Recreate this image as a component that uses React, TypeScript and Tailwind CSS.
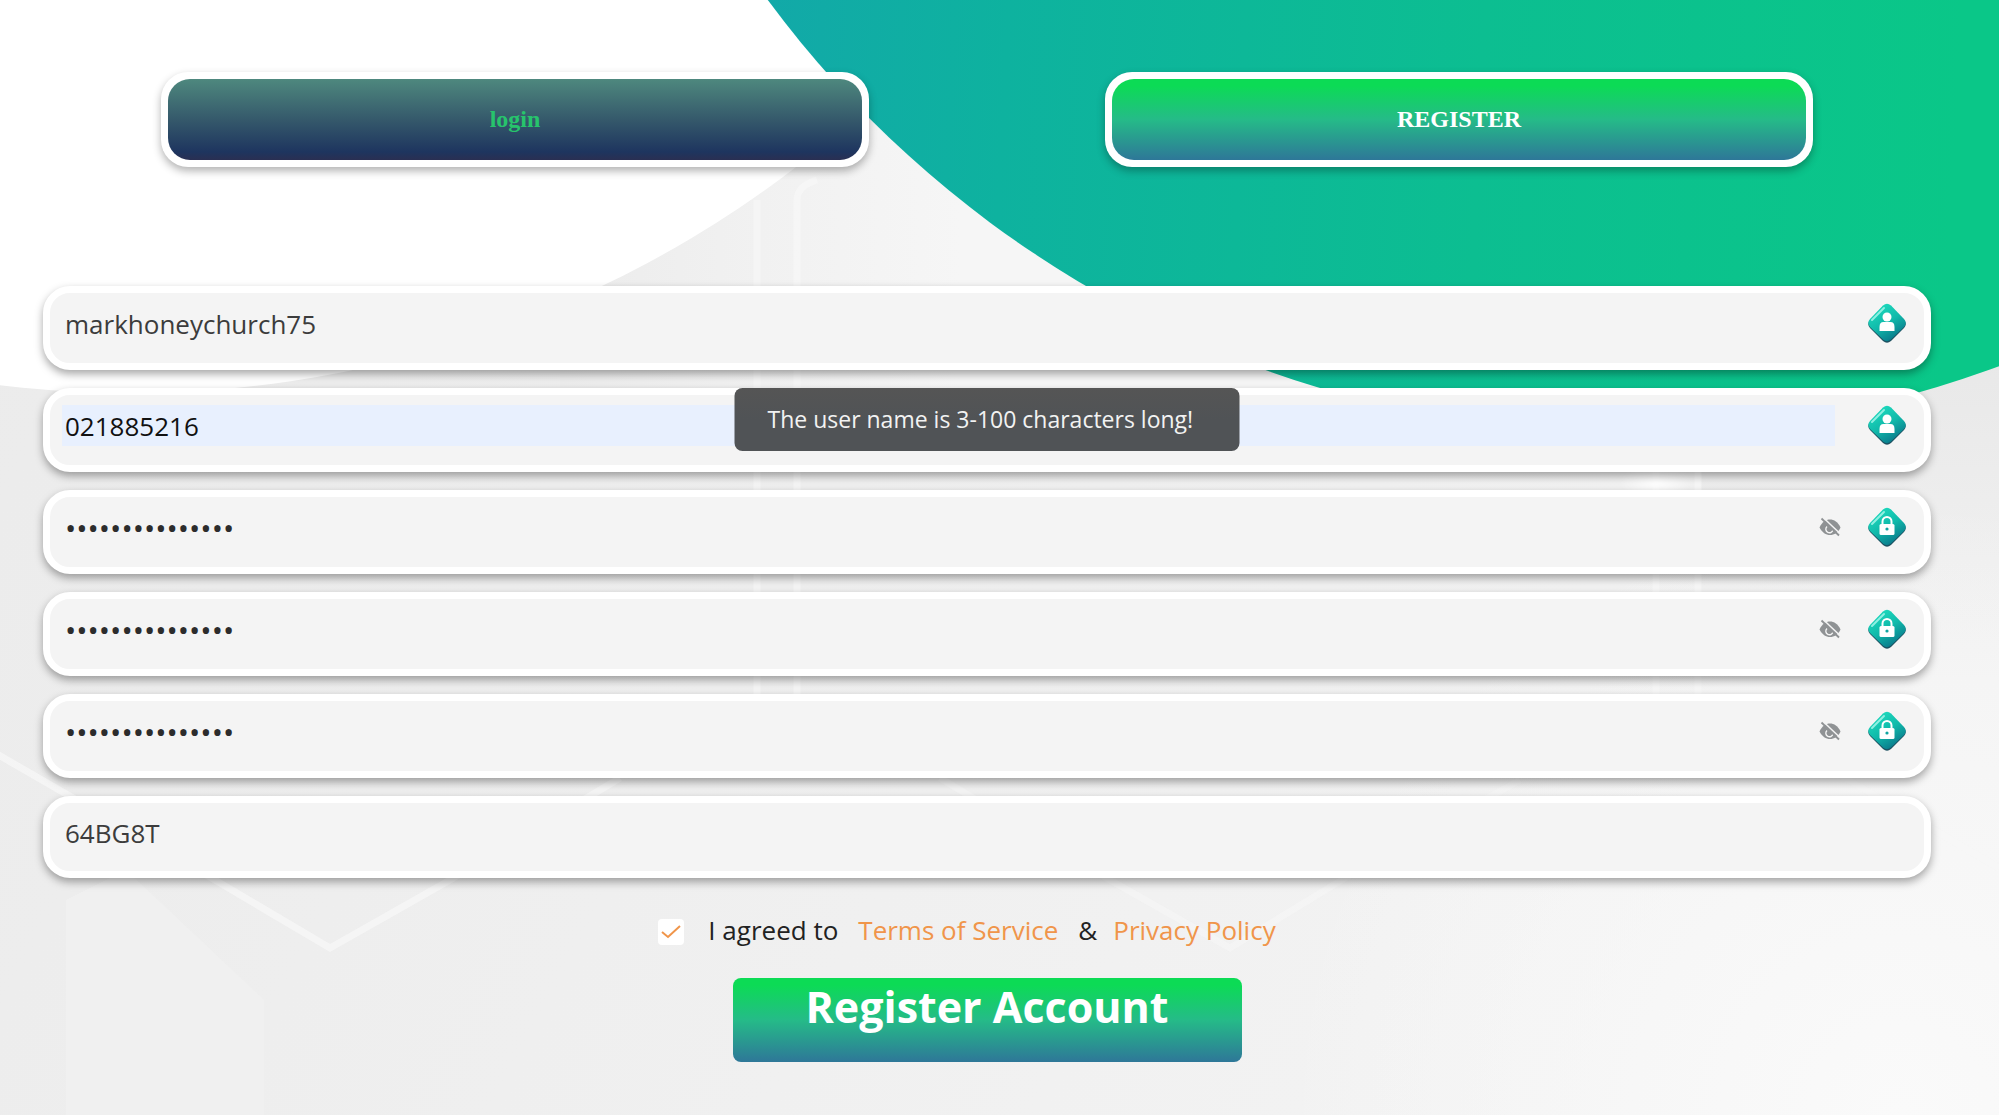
import React, { useState } from 'react';

type FieldKind = 'user' | 'lock' | 'code';

interface IField {
    id: string;
    label: string;
    kind: FieldKind;
    value: string;
}

const FIELDS: IField[] = [
    { id: 'account', label: 'Account', kind: 'user', value: 'markhoneychurch75' },
    { id: 'phone', label: 'User name', kind: 'user', value: '021885216' },
    { id: 'password', label: 'Password', kind: 'lock', value: 'aaaaaaaaaaaaaaa' },
    { id: 'confirm', label: 'Confirm password', kind: 'lock', value: 'aaaaaaaaaaaaaaa' },
    { id: 'withdraw', label: 'Withdrawal password', kind: 'lock', value: 'aaaaaaaaaaaaaaa' },
    { id: 'invite', label: 'Invitation code', kind: 'code', value: '64BG8T' },
];

const Background = () => (
    <svg className="absolute inset-0 -z-10 h-full w-full" viewBox="0 0 1999 1115" preserveAspectRatio="none" aria-hidden="true">
        <defs>
            <linearGradient id="page" x1="0" y1="0" x2="1" y2="0.3">
                <stop offset="0" stopColor="#ebebeb" />
                <stop offset="0.5" stopColor="#efefef" />
                <stop offset="1" stopColor="#f3f3f3" />
            </linearGradient>
            <linearGradient id="top" x1="0" y1="0" x2="1" y2="0">
                <stop offset="0" stopColor="#ececec" />
                <stop offset="0.4" stopColor="#f6f6f6" />
                <stop offset="1" stopColor="#f6f6f6" />
            </linearGradient>
            <linearGradient id="green" gradientUnits="userSpaceOnUse" x1="770" y1="0" x2="1960" y2="60">
                <stop offset="0" stopColor="#12a9a8" />
                <stop offset="0.2" stopColor="#0eb29f" />
                <stop offset="0.6" stopColor="#0cbe91" />
                <stop offset="1" stopColor="#0ac788" />
            </linearGradient>
            <linearGradient id="column" x1="0" y1="0" x2="0" y2="1">
                <stop offset="0" stopColor="#e8e8e8" />
                <stop offset="1" stopColor="#f3f3f3" />
            </linearGradient>
            <radialGradient id="corner" gradientUnits="userSpaceOnUse" cx="1900" cy="1115" r="620">
                <stop offset="0" stopColor="#fafafa" />
                <stop offset="1" stopColor="#fafafa" stopOpacity="0" />
            </radialGradient>
            <radialGradient id="glow">
                <stop offset="0" stopColor="#fff" />
                <stop offset="1" stopColor="#fff" stopOpacity="0" />
            </radialGradient>
        </defs>
        <rect width="1999" height="1115" fill="url(#page)" />
        <rect x="560" width="1000" height="400" fill="url(#top)" />
        <rect x="1700" y="350" width="299" height="330" fill="url(#column)" />
        <rect width="1999" height="1115" fill="url(#corner)" />
        <path d="M66 1115V900l60-30 138 130v115z" fill="#f0f0f0" />
        <g fill="none" stroke="#f8f8f8" strokeWidth="7">
            <path d="M757 760V200M797 760V200q0-14 20-20" strokeOpacity="0.6" />
            <path d="M1656 760V470M1698 760V470" strokeOpacity="0.8" />
            <path d="M-10 750L215 880L330 948L450 880L620 778" strokeOpacity="0.7" />
            <path d="M940 778L1110 880L1230 948L1345 878L1520 780M1840 775L1999 868" strokeOpacity="0.5" />
        </g>
        <ellipse cx="1656" cy="482" rx="36" ry="18" fill="url(#glow)" />
        <circle cx="130" cy="-702" r="1095" fill="#fff" />
        <circle cx="1627" cy="-636" r="1069" fill="url(#green)" />
    </svg>
);

const BadgeIcon = ({ kind }: { kind: FieldKind }) => (
    <svg className="h-10 w-10 shrink-0" viewBox="0 0 40 40" aria-hidden="true">
        <defs>
            <linearGradient id="gem" x1="0.2" y1="0" x2="0.8" y2="1">
                <stop offset="0" stopColor="#1fdfc0" />
                <stop offset="0.5" stopColor="#10b9aa" />
                <stop offset="0.85" stopColor="#0b8390" />
                <stop offset="1" stopColor="#0b4a60" />
            </linearGradient>
        </defs>
        <path d="M16 3.500q4-3.500 8 0L37 17q3.500 4 0 8L24 38q-4 3.500-8 0L3 25q-3.500-4 0-8z" fill="#1c5060" />
        <path d="M16 2.500q4-3.500 8 0L37 16q3.500 4 0 8L24 36.500q-4 3.500-8 0L3 24q-3.500-4 0-8z" fill="url(#gem)" />
        <path d="M5 17L17 5" stroke="#8ff0e2" strokeWidth="2" strokeLinecap="round" />
        {kind === 'user' ? (
            <g fill="#fff">
                <circle cx="20" cy="14" r="4.500" />
                <path d="M12.500 28v-4q0-5 4-5h7q4 0 4 5v4z" />
            </g>
        ) : (
            <>
                <path d="M15.500 18v-3.500a4.500 4.500 0 019 0V18" fill="none" stroke="#fff" strokeWidth="2" />
                <rect x="12.500" y="17" width="15" height="11" rx="1.500" fill="#fff" />
                <circle cx="20" cy="22" r="1.600" fill="#10a5a2" />
            </>
        )}
    </svg>
);

const EyeOffIcon = () => (
    <svg className="h-5 w-6" viewBox="0 0 24 20" aria-hidden="true">
        <path d="M1.500 10.500C4 5 8 2.500 12 2.500s8 2.500 10.500 8C20.500 15.500 16 18 12 18S4 15.500 1.500 10.500z" fill="#8f9294" />
        <path d="M9 9.500a3.600 3.600 0 106 3" fill="none" stroke="#f4f4f4" strokeWidth="1.400" />
        <path d="M5 0.500L22.500 17" stroke="#f4f4f4" strokeWidth="1.600" />
        <path d="M3.500 1.500L21 18.500" stroke="#8f9294" strokeWidth="1.800" />
    </svg>
);

const App = () => {
    const [values, setValues] = useState<Record<string, string>>(
        Object.fromEntries(FIELDS.map((field) => [field.id, field.value]))
    );
    const [visible, setVisible] = useState<Record<string, boolean>>({});
    const [agreed, setAgreed] = useState(true);

    const handleChange = (id: string, value: string) => {
        setValues((prev) => ({ ...prev, [id]: value }));
    };

    const toggleVisible = (id: string) => {
        setVisible((prev) => ({ ...prev, [id]: !prev[id] }));
    };

    const inputStyle = (field: IField) => {
        if (field.id === 'phone') return 'bg-[#e8f0fe] text-[26px] text-[#111]';
        if (field.kind === 'lock' && !visible[field.id]) return 'text-[30px] text-[#2c2c2c]';
        return 'text-[26px] text-[#3c3c3c]';
    };

    return (
        <div className="relative isolate min-h-screen overflow-hidden pt-18 pr-17 pb-12 pl-[43px] font-['Open_Sans',sans-serif]">
            <Background />

            <nav className="grid grid-cols-2 justify-items-center font-['Liberation_Serif',serif] text-2xl font-bold">
                <button type="button" className="h-[95px] w-3/4 rounded-[27px] bg-white p-[7px] text-[#27c46c] shadow-[0_4px_8px_rgba(0,0,0,0.3)]">
                    <span className="flex h-full items-center justify-center rounded-[22px] bg-[linear-gradient(#4e887e,#35596b_50%,#1e355f_90%,#2a2f52)] pb-px">login</span>
                </button>
                <button type="button" className="h-[95px] w-3/4 rounded-[27px] bg-white p-[7px] text-white shadow-[0_4px_8px_rgba(0,0,0,0.3)]">
                    <span className="flex h-full items-center justify-center rounded-[22px] bg-[linear-gradient(#0cdb55_8%,#25bb88_50%,#2e7798)] pb-px">REGISTER</span>
                </button>
            </nav>

            <form className="mt-[119px]" onSubmit={(e) => e.preventDefault()}>
                <div className="relative flex flex-col gap-[18px]">
                    {FIELDS.map((field) => (
                        <div
                            key={field.id}
                            className={`flex items-start rounded-[27px] border-[7px] border-white bg-[#f4f4f4] pr-[17px] pl-3 shadow-[0_4px_8px_rgba(0,0,0,0.35)] ${field.kind === 'code' ? 'h-[82px] pt-[9px]' : 'h-[84px] pt-[10px]'}`}
                        >
                            <input
                                id={field.id}
                                aria-label={field.label}
                                type={field.kind === 'lock' && !visible[field.id] ? 'password' : 'text'}
                                value={values[field.id]}
                                onChange={(e) => handleChange(field.id, e.target.value)}
                                className={`h-[41px] min-w-0 flex-1 px-[3px] outline-none ${inputStyle(field)}`}
                            />
                            {field.kind === 'user' && <span className="w-8" />}
                            {field.kind === 'lock' && (
                                <button type="button" aria-label="Show password" onClick={() => toggleVisible(field.id)} className="mt-[10px] mr-[25px]">
                                    <EyeOffIcon />
                                </button>
                            )}
                            {field.kind !== 'code' && <BadgeIcon kind={field.kind} />}
                        </div>
                    ))}

                    {/* Toast */}
                    <div role="alert" className="absolute top-[102px] left-1/2 flex h-[63px] w-[505px] -translate-x-1/2 items-center rounded-lg bg-[linear-gradient(#555555,#505356_50%)] pl-[33px] text-[23px] text-[#f2f2f2]">
                        The user name is 3-100 characters long!
                    </div>
                </div>

                <div className="mt-[34px] flex h-10 items-center justify-center pr-10 text-[26px] text-[#222]">
                    <span className="relative mr-6 h-[26px] w-[26px]">
                        <input
                            id="agree"
                            type="checkbox"
                            checked={agreed}
                            onChange={(e) => setAgreed(e.target.checked)}
                            className="block h-full w-full appearance-none rounded-sm bg-white"
                        />
                        {agreed && (
                            <svg className="pointer-events-none absolute inset-0" viewBox="0 0 26 26" fill="none" aria-hidden="true">
                                <path d="M4 13l6 5L22 7" stroke="#f0954a" strokeWidth="2" />
                            </svg>
                        )}
                    </span>
                    <label htmlFor="agree" className="pb-1">I agreed to</label>
                    <a href="#terms" className="ml-5 pb-1 text-[#f0954a]">Terms of Service</a>
                    <span className="mr-4 ml-5 pb-1">&amp;</span>
                    <a href="#privacy" className="pb-1 text-[#f0954a]">Privacy Policy</a>
                </div>

                <button type="submit" className="mx-auto mt-[26px] block h-[84px] w-[509px] rounded-lg bg-[linear-gradient(#0cdb55_8%,#25bb88_50%,#2e7798)] pb-[26px] text-[43px] leading-[58px] font-bold text-white">
                    Register Account
                </button>
            </form>
        </div>
    );
};

export default App;
